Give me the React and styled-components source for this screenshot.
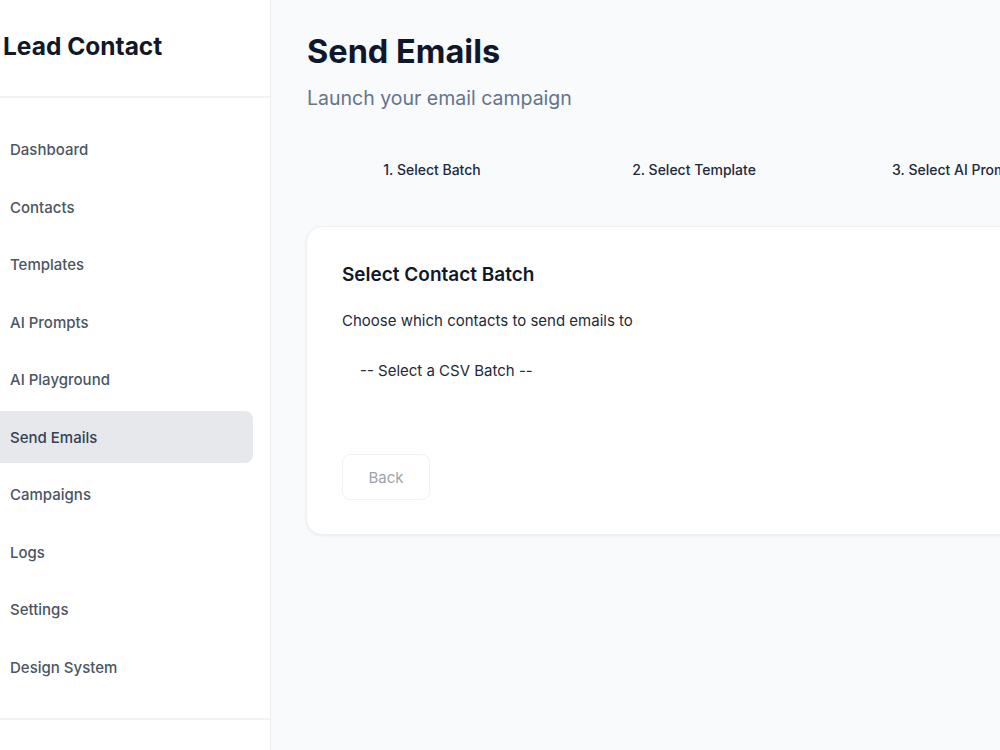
import React from "react";
import styled, { createGlobalStyle } from "styled-components";

const Global = createGlobalStyle`
  html, body { margin: 0; padding: 0; overflow: hidden; }
  body { font-family: Inter, "Noto Sans", sans-serif; background: #f8fafc; -webkit-font-smoothing: antialiased; }
  * { box-sizing: border-box; }
`;

const Shell = styled.div`
  display: flex;
  width: 100%;
  height: 750px;
`;

const Sidebar = styled.aside`
  flex: 0 0 271px;
  width: 271px;
  background: #ffffff;
  border-right: 1px solid #eceef2;
  display: flex;
  flex-direction: column;
`;

const Brand = styled.div`
  height: 98px;
  padding: 0 0 4px 3px;
  display: flex;
  align-items: center;
  border-bottom: 2px solid #f1f2f4;
  font-size: 24.5px;
  font-weight: 700;
  color: #111827;
`;

const Nav = styled.nav`
  display: flex;
  flex-direction: column;
  gap: 5.5px;
  padding: 25.5px 17px 25px 0;
  border-bottom: 2px solid #f1f2f4;
`;

const NavItem = styled.a`
  display: flex;
  align-items: center;
  height: 52px;
  padding-left: 10px;
  border-radius: 0 8px 8px 0;
  font-size: 15px;
  font-weight: 500;
  color: ${(p) => (p.$active ? "#334155" : "#4b5563")};
  background: ${(p) => (p.$active ? "#e7e8ec" : "transparent")};
  text-decoration: none;
`;

const Main = styled.main`
  flex: 1;
  min-width: 0;
  overflow: hidden;
  padding: 32px 0 0 35px;
`;

const Content = styled.div`
  width: 1100px;
`;

const Header = styled.header`
  padding-left: 1px;
`;

const Title = styled.h1`
  margin: 0;
  font-size: 32.5px;
  line-height: 40px;
  font-weight: 700;
  color: #0f172a;
`;

const Subtitle = styled.p`
  margin: 12px 0 0;
  font-size: 19.5px;
  line-height: 28px;
  color: #64748b;
`;

const Steps = styled.ol`
  list-style: none;
  margin: 48px 0 0;
  padding: 0 0 0 1px;
  display: grid;
  grid-template-columns: repeat(4, 250px);
  gap: 12px;
`;

const Step = styled.li`
  text-align: center;
  font-size: 14px;
  line-height: 20px;
  font-weight: 500;
  color: #1e293b;
  white-space: nowrap;
`;

const Card = styled.section`
  margin-top: 46px;
  background: #ffffff;
  border: 1px solid #eef0f3;
  border-radius: 16px;
  box-shadow: 0 1px 3px rgba(15, 23, 42, 0.06);
  padding: 34px 35px 34px;
`;

const CardTitle = styled.h2`
  margin: 0;
  font-size: 19px;
  line-height: 28px;
  font-weight: 600;
  color: #111827;
`;

const CardText = styled.p`
  margin: 20px 0 0;
  font-size: 15px;
  line-height: 24px;
  color: #1f2937;
`;

const SelectBox = styled.div`
  margin-top: 13px;
  height: 48px;
  display: flex;
  align-items: center;
  padding-left: 17px;
  font-size: 15px;
  color: #1f2937;
  border: 1px solid transparent;
  border-radius: 8px;
`;

const Actions = styled.div`
  margin-top: 60px;
  display: flex;
`;

const BackButton = styled.button`
  width: 88px;
  height: 46px;
  border: 1px solid #f0f2f5;
  border-radius: 8px;
  background: #ffffff;
  font-family: inherit;
  font-size: 15px;
  color: #9ca3af;
  cursor: default;
`;

const navItems = [
  "Dashboard",
  "Contacts",
  "Templates",
  "AI Prompts",
  "AI Playground",
  "Send Emails",
  "Campaigns",
  "Logs",
  "Settings",
  "Design System",
];

const steps = ["1. Select Batch", "2. Select Template", "3. Select AI Prompt", "4. Review & Send"];

export default function App() {
  return (
    <>
      <Global />
      <Shell>
        <Sidebar>
          <Brand>Lead Contact</Brand>
          <Nav>
            {navItems.map((n) => (
              <NavItem key={n} $active={n === "Send Emails"}>
                {n}
              </NavItem>
            ))}
          </Nav>
        </Sidebar>
        <Main>
          <Content>
            <Header>
              <Title>Send Emails</Title>
              <Subtitle>Launch your email campaign</Subtitle>
            </Header>
            <Steps>
              {steps.map((s) => (
                <Step key={s}>{s}</Step>
              ))}
            </Steps>
            <Card>
              <CardTitle>Select Contact Batch</CardTitle>
              <CardText>Choose which contacts to send emails to</CardText>
              <SelectBox>-- Select a CSV Batch --</SelectBox>
              <Actions>
                <BackButton disabled>Back</BackButton>
              </Actions>
            </Card>
          </Content>
        </Main>
      </Shell>
    </>
  );
}
